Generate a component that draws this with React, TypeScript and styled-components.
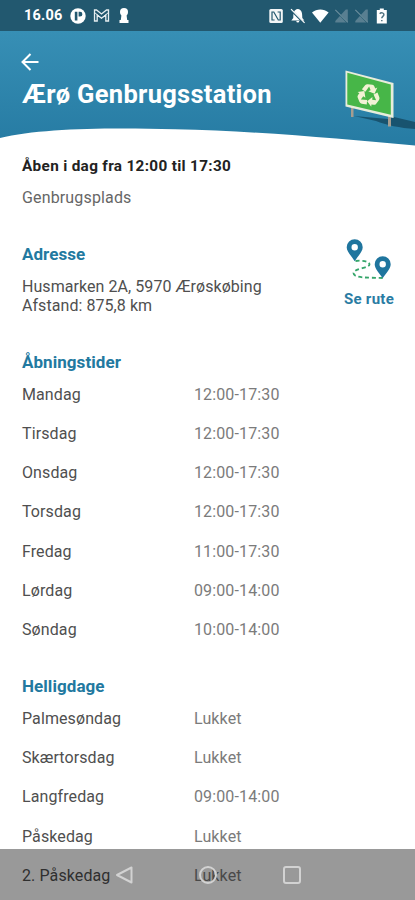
import React from 'react';
import styled, { createGlobalStyle } from 'styled-components';

const Global = createGlobalStyle`
  * { box-sizing: border-box; }
  html, body { margin: 0; padding: 0; background: #fff; overflow: hidden; }
  body { font-family: Roboto, "Liberation Sans", sans-serif; }
`;

const Screen = styled.div`
  position: relative;
  width: 415px;
  height: 900px;
  overflow: hidden;
  background: #fff;
  display: flex;
  flex-direction: column;
`;

const StatusBar = styled.div`
  flex: none;
  height: 31px;
  padding: 0 26px 0 24px;
  display: flex;
  align-items: center;
  justify-content: space-between;
  background: #22586f;
  color: #fff;
`;

const StatusGroup = styled.div<{ $gap: number }>`
  display: flex;
  align-items: center;
  gap: ${(p) => p.$gap}px;
  svg { display: block; }
`;

const Clock = styled.span`
  font-size: 14.5px;
  font-weight: 700;
  line-height: 18px;
  letter-spacing: 0.2px;
  width: 39px;
  margin-top: 1px;
`;

const Header = styled.header`
  position: relative;
  flex: none;
  height: 117px;
  padding: 22px 21px 0;
  display: flex;
  flex-direction: column;
  align-items: flex-start;
  color: #fff;
`;

const HeaderArt = styled.svg`
  position: absolute;
  left: 0;
  top: 0;
  display: block;
`;

const BackButton = styled.button`
  position: relative;
  border: 0;
  padding: 0;
  background: none;
  height: 18px;
  display: block;
  svg { display: block; }
`;

const Title = styled.h1`
  position: relative;
  margin: 7px 0 0 1px;
  font-size: 25.5px;
  font-weight: 700;
  line-height: 32px;
  letter-spacing: 0.28px;
`;

const Content = styled.main`
  flex: none;
  padding: 8px 22px 0;
  display: flex;
  flex-direction: column;
`;

const OpenToday = styled.p`
  margin: 0;
  font-size: 15.3px;
  font-weight: 700;
  line-height: 21px;
  letter-spacing: 0.33px;
  color: #222;
`;

const Kind = styled.p`
  margin: 10px 0 0;
  font-size: 16px;
  line-height: 21px;
  letter-spacing: 0.15px;
  color: #666;
`;

const AddressBlock = styled.section`
  margin-top: 27px;
  height: 80px;
  display: flex;
  justify-content: space-between;
`;

const SectionTitle = styled.h2`
  margin: 0;
  padding-top: 9px;
  font-size: 17px;
  font-weight: 700;
  line-height: 20px;
  letter-spacing: 0.06px;
  color: #2279a0;
`;

const AddressText = styled.p`
  margin: 13px 0 0;
  font-size: 16px;
  line-height: 19.4px;
  letter-spacing: 0.06px;
  color: #4f4f4f;
`;

const RouteButton = styled.button`
  width: 54px;
  margin-right: -3px;
  padding: 0;
  border: 0;
  background: none;
  display: flex;
  flex-direction: column;
  align-items: center;
  font-family: inherit;
  font-size: 15px;
  font-weight: 700;
  line-height: 18px;
  letter-spacing: 0.3px;
  white-space: nowrap;
  color: #2a7ca3;
  svg { display: block; margin: 4px 0 7px; }
`;

const Schedule = styled.section<{ $top: number }>`
  margin-top: ${(p) => p.$top}px;
  display: flex;
  flex-direction: column;
`;

const Row = styled.div`
  height: 39.2px;
  padding-top: 1px;
  display: grid;
  grid-template-columns: 172px 1fr;
  align-items: center;
  font-size: 16px;
  line-height: 20px;
`;

const Rows = styled.div`
  margin-top: 2.8px;
`;

const Day = styled.span`
  color: #4f4f4f;
  letter-spacing: 0.1px;
`;

const Hours = styled.span`
  color: #7b7b7b;
  letter-spacing: 0.13px;
`;

const NavBar = styled.nav`
  position: absolute;
  left: 0;
  right: 0;
  bottom: 0;
  height: 51px;
  padding: 0 113px 0 114px;
  display: flex;
  align-items: center;
  justify-content: space-between;
  background: rgba(0, 0, 0, 0.4);
  svg { display: block; }
`;

const openingHours = [
  ['Mandag', '12:00-17:30'],
  ['Tirsdag', '12:00-17:30'],
  ['Onsdag', '12:00-17:30'],
  ['Torsdag', '12:00-17:30'],
  ['Fredag', '11:00-17:30'],
  ['Lørdag', '09:00-14:00'],
  ['Søndag', '10:00-14:00'],
];

const holidays = [
  ['Palmesøndag', 'Lukket'],
  ['Skærtorsdag', 'Lukket'],
  ['Langfredag', '09:00-14:00'],
  ['Påskedag', 'Lukket'],
  ['2. Påskedag', 'Lukket'],
];

const Hill = () => (
  <HeaderArt width="415" height="117" viewBox="0 31 415 117">
    <defs>
      <linearGradient id="sky" x1="0" y1="0" x2="0" y2="1">
        <stop offset="0" stopColor="#378fb5" />
        <stop offset="1" stopColor="#267ba3" />
      </linearGradient>
    </defs>
    <path d="M0 31H415V145.5C340 139 260 131 175 129.3C105 127.5 40 128.5 0 138Z" fill="url(#sky)" />
    <path d="M354 116L388 119L394 117L415 122V129C400 128 386 125 376 121Z" fill="#18536f" />
    <path d="M351 107H353.5V117H351ZM388 116H391V126.5H388Z" fill="#a69d90" />
    <path d="M345.5 70.5L393.5 83V118L345.5 106.5Z" fill="#e8eddb" />
    <path d="M347.3 72.8L390.8 84.5V114.8L347.3 104.4Z" fill="#47b648" />
    <g transform="translate(368.7 95.4) rotate(8)">
      {[0, 120, 240].map((a) => (
        <g key={a} transform={`rotate(${a})`} fill="#f2f2d4">
          <path d="M-7.6 -5.2L-5 -9.6Q-4 -11 -2.4 -11H2.2Q3.6 -11 4.4 -9.7L5.5 -7.8L7.4 -9L5.6 -2.4L-1 -4L1.2 -5.4L-0.8 -8.8L-3.8 -3.2Z" />
        </g>
      ))}
    </g>
  </HeaderArt>
);

const RouteIcon = () => (
  <svg width="46" height="44" viewBox="0 -1.5 46 44">
    <path
      d="M9.5 20.5C17 19.5 23.5 21 23.5 24C23.5 27.5 8 28 7.5 32.5C7.5 38 23 37 37 37.5"
      fill="none" stroke="#35a56a" strokeWidth="1.8" strokeDasharray="4 2.8"
    />
    {[[8.7, 0.3], [36.7, 17.3]].map(([x, y]) => (
      <path
        key={x}
        transform={`translate(${x} ${y})`}
        fillRule="evenodd"
        fill="#1f759e"
        d="M0 -1.5A8 8 0 0 1 8 6.4C8 11 3 15.5 0 20.5C-3 15.5 -8 11 -8 6.4A8 8 0 0 1 0 -1.5ZM0 3.2A3.2 3.2 0 1 0 0 9.6A3.2 3.2 0 1 0 0 3.2Z"
      />
    ))}
  </svg>
);

const AppIcons = () => (
  <>
    <svg width="16" height="16" viewBox="0 0 16 16">
      <circle cx="8" cy="8" r="7.7" fill="#fff" />
      <path d="M4.8 3.8V12.5H7.4V3.8ZM8.6 3.8H10A2.4 2.4 0 0 1 10 8.6H8.6Z" fill="#22586f" />
    </svg>
    <svg width="17" height="13" viewBox="0 0 17 13" fill="none" stroke="#e5edf0" strokeWidth="1.3">
      <path d="M1.5 12V1H3.5L8.5 5L13.5 1H15.5V12H12.8V6L8.5 9.2L4.2 6V12Z" />
      <path d="M1.5 3.5L8.5 9.2L15.5 3.5" strokeWidth="1" />
    </svg>
    <svg width="14" height="15" viewBox="-2 0 14 15" fill="#fff">
      <circle cx="5" cy="4" r="4" />
      <path d="M2.6 6H7.4L8.2 12H9.5V15H0.5V12H1.8Z" />
    </svg>
  </>
);

const SystemIcons = () => (
  <svg width="120" height="16" viewBox="269.2 8 120 16">
    <rect x="269.5" y="9" width="13.5" height="14" rx="1.5" fill="#f3f6f7" />
    <path d="M274.8 20H272.2V12H274L278.5 20H280.4V12H277.8" fill="none" stroke="#22586f" strokeWidth="1.2" />
    <path d="M298 9C294 9.5 293.5 13 293.5 18L291.5 20.5H304.5L302.5 18C302.5 13 302 9.5 298 9ZM296.5 21H299.5A1.5 1.5 0 0 1 296.5 21Z" fill="#fff" />
    <path d="M291.5 10.2L304 23" stroke="#22586f" strokeWidth="2" />
    <path d="M291.2 9.2L304.8 22.8" stroke="#fff" strokeWidth="1.2" />
    <path d="M312.2 12.6C317 8.6 324 8.6 328.8 12.6L320.5 22.8Z" fill="#fff" />
    {[0, 20].map((x) => (
      <g key={x} transform={`translate(${x} 0)`}>
        <path d="M348 9.5V22.5H335.5V21L346 9.5Z" fill="#597f91" />
        <path d="M336 10.5L348 23" stroke="#22586f" strokeWidth="1.6" />
        <path d="M335.5 9.8L348 22.3" stroke="#6e909f" strokeWidth="1.1" />
      </g>
    ))}
    <path d="M380 8.5H384V10H387V23.5H377V10H380Z" fill="#fff" />
    <path d="M380 13.8C381 12 384.6 12.7 384 15C383.7 16.4 382 16.5 382 18.3M382 20V21.3" fill="none" stroke="#537483" strokeWidth="1.5" />
  </svg>
);

const HourList = ({ rows }: { rows: string[][] }) => (
  <Rows>
    {rows.map(([day, hours]) => (
      <Row key={day}>
        <Day>{day}</Day>
        <Hours>{hours}</Hours>
      </Row>
    ))}
  </Rows>
);

export default function App() {
  return (
    <Screen>
      <Global />
      <StatusBar>
        <StatusGroup $gap={7}>
          <Clock>16.06</Clock>
          <AppIcons />
        </StatusGroup>
        <StatusGroup $gap={0}>
          <SystemIcons />
        </StatusGroup>
      </StatusBar>
      <Header>
        <Hill />
        <BackButton aria-label="Tilbage">
          <svg width="18" height="18" viewBox="0 0 18 18" fill="none" stroke="#fff" strokeWidth="2">
            <path d="M17.5 9H1.5M9.5 1L1.5 9L9.5 17" />
          </svg>
        </BackButton>
        <Title>Ærø Genbrugsstation</Title>
      </Header>
      <Content>
        <OpenToday>Åben i dag fra 12:00 til 17:30</OpenToday>
        <Kind>Genbrugsplads</Kind>
        <AddressBlock>
          <div>
            <SectionTitle>Adresse</SectionTitle>
            <AddressText>
              Husmarken 2A, 5970 Ærøskøbing
              <br />
              Afstand: 875,8 km
            </AddressText>
          </div>
          <RouteButton>
            <RouteIcon />
            Se rute
          </RouteButton>
        </AddressBlock>
        <Schedule $top={28}>
          <SectionTitle>Åbningstider</SectionTitle>
          <HourList rows={openingHours} />
        </Schedule>
        <Schedule $top={18}>
          <SectionTitle>Helligdage</SectionTitle>
          <HourList rows={holidays} />
        </Schedule>
      </Content>
      <NavBar>
        <svg width="20" height="20" viewBox="0 0 20 20" fill="none" stroke="#d2d2d2" strokeWidth="2">
          <path d="M17.5 2.5V17.5L3 10Z" strokeLinejoin="round" />
        </svg>
        <svg width="20" height="20" viewBox="0 0 20 20" fill="none" stroke="#d2d2d2" strokeWidth="2">
          <circle cx="10" cy="10" r="8" />
        </svg>
        <svg width="20" height="20" viewBox="0 0 20 20" fill="none" stroke="#d2d2d2" strokeWidth="2">
          <rect x="2" y="2" width="16" height="16" rx="2" />
        </svg>
      </NavBar>
    </Screen>
  );
}
